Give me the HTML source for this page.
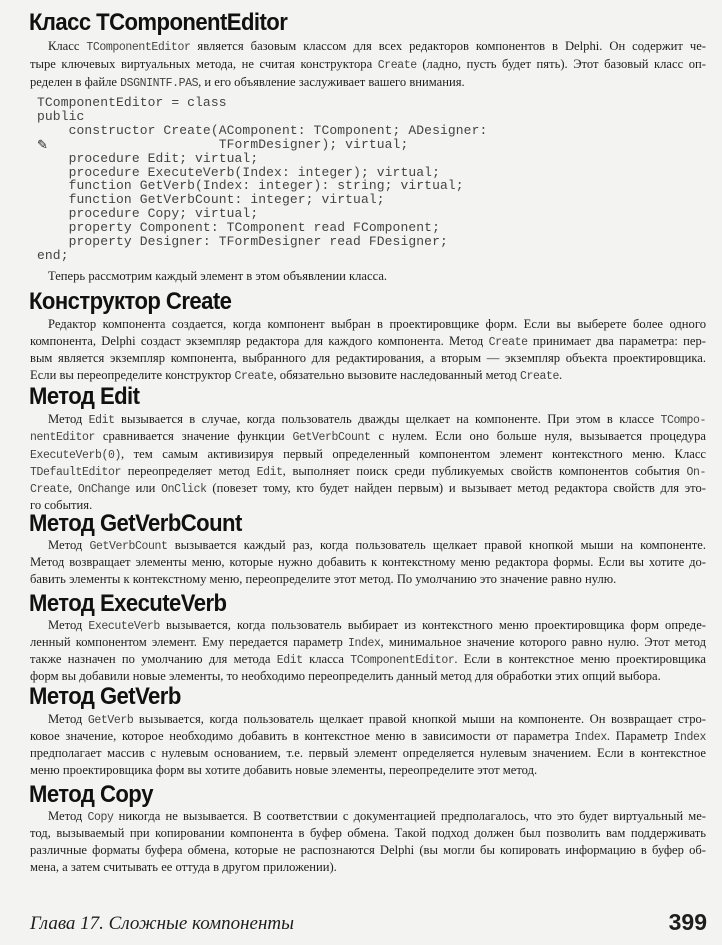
<!DOCTYPE html>
<html><head><meta charset="utf-8"><style>
body{margin:0;background:#f3f3f1;}
#p{position:relative;width:722px;height:945px;overflow:hidden;background:#f3f3f1;color:#1e1e1e;font-family:"Liberation Serif","Noto Serif CJK SC",serif;font-size:12.6px;}
.h{position:absolute;left:29px;font-family:"Liberation Sans Narrow","Liberation Sans",sans-serif;font-weight:bold;font-size:24px;line-height:26px;letter-spacing:-0.6px;color:#111;transform:scaleX(0.92);transform-origin:left;white-space:nowrap;}
.l{position:absolute;left:30px;width:676px;line-height:17px;height:17px;text-align:justify;text-align-last:justify;white-space:nowrap;overflow:visible;}
.l.f{left:48px;width:658px;}
.l.e{text-align-last:left;}
code{font-family:"Liberation Mono",monospace;font-size:11.5px;letter-spacing:-0.4px;color:#444;}
.c{position:absolute;left:37px;font-family:"Liberation Mono",monospace;font-size:13px;letter-spacing:0.1px;line-height:13.9px;white-space:pre;color:#444;}
</style></head><body><div id="p">
<div class="h" style="top:10px;">Класс TComponentEditor</div>
<div class="l f" style="top:38px;">Класс <code>TComponentEditor</code> является базовым классом для всех редакторов компонентов в Delphi. Он содержит че-</div>
<div class="l" style="top:56px;">тыре ключевых виртуальных метода, не считая конструктора <code>Create</code> (ладно, пусть будет пять). Этот базовый класс оп-</div>
<div class="l e" style="top:74px;">ределен в файле <code>DSGNINTF.PAS</code>, и его объявление заслуживает вашего внимания.</div>
<div class="c" style="top:96px;">TComponentEditor = class
public
    constructor Create(AComponent: TComponent; ADesigner:
                       TFormDesigner); virtual;
    procedure Edit; virtual;
    procedure ExecuteVerb(Index: integer); virtual;
    function GetVerb(Index: integer): string; virtual;
    function GetVerbCount: integer; virtual;
    procedure Copy; virtual;
    property Component: TComponent read FComponent;
    property Designer: TFormDesigner read FDesigner;
end;</div>
<div style="position:absolute;left:37px;top:137px;font-size:13px;">&#9998;</div>
<div class="l f" style="top:268px;text-align-last:left;">Теперь рассмотрим каждый элемент в этом объявлении класса.</div>
<div class="h" style="top:289px;">Конструктор Create</div>
<div class="l f" style="top:316px;">Редактор компонента создается, когда компонент выбран в проектировщике форм. Если вы выберете более одного</div>
<div class="l" style="top:333px;">компонента, Delphi создаст экземпляр редактора для каждого компонента. Метод <code>Create</code> принимает два параметра: пер-</div>
<div class="l" style="top:350px;">вым является экземпляр компонента, выбранного для редактирования, а вторым — экземпляр объекта проектировщика.</div>
<div class="l e" style="top:367px;">Если вы переопределите конструктор <code>Create</code>, обязательно вызовите наследованный метод <code>Create</code>.</div>
<div class="h" style="top:384px;">Метод Edit</div>
<div class="l f" style="top:411px;">Метод <code>Edit</code> вызывается в случае, когда пользователь дважды щелкает на компоненте. При этом в классе <code>TCompo-</code></div>
<div class="l" style="top:428px;"><code>nentEditor</code> сравнивается значение функции <code>GetVerbCount</code> с нулем. Если оно больше нуля, вызывается процедура</div>
<div class="l" style="top:446px;"><code>ExecuteVerb(0)</code>, тем самым активизируя первый определенный компонентом элемент контекстного меню. Класс</div>
<div class="l" style="top:463px;"><code>TDefaultEditor</code> переопределяет метод <code>Edit</code>, выполняет поиск среди публикуемых свойств компонентов события <code>On-</code></div>
<div class="l" style="top:480px;"><code>Create</code>, <code>OnChange</code> или <code>OnClick</code> (повезет тому, кто будет найден первым) и вызывает метод редактора свойств для это-</div>
<div class="l e" style="top:497px;">го события.</div>
<div class="h" style="top:511px;">Метод GetVerbCount</div>
<div class="l f" style="top:537px;">Метод <code>GetVerbCount</code> вызывается каждый раз, когда пользователь щелкает правой кнопкой мыши на компоненте.</div>
<div class="l" style="top:554px;">Метод возвращает элементы меню, которые нужно добавить к контекстному меню редактора формы. Если вы хотите до-</div>
<div class="l e" style="top:571px;">бавить элементы к контекстному меню, переопределите этот метод. По умолчанию это значение равно нулю.</div>
<div class="h" style="top:591px;">Метод ExecuteVerb</div>
<div class="l f" style="top:617px;">Метод <code>ExecuteVerb</code> вызывается, когда пользователь выбирает из контекстного меню проектировщика форм опреде-</div>
<div class="l" style="top:634px;">ленный компонентом элемент. Ему передается параметр <code>Index</code>, минимальное значение которого равно нулю. Этот метод</div>
<div class="l" style="top:651px;">также назначен по умолчанию для метода <code>Edit</code> класса <code>TComponentEditor</code>. Если в контекстное меню проектировщика</div>
<div class="l e" style="top:668px;">форм вы добавили новые элементы, то необходимо переопределить данный метод для обработки этих опций выбора.</div>
<div class="h" style="top:684px;">Метод GetVerb</div>
<div class="l f" style="top:711px;">Метод <code>GetVerb</code> вызывается, когда пользователь щелкает правой кнопкой мыши на компоненте. Он возвращает стро-</div>
<div class="l" style="top:728px;">ковое значение, которое необходимо добавить в контекстное меню в зависимости от параметра <code>Index</code>. Параметр <code>Index</code></div>
<div class="l" style="top:745px;">предполагает массив с нулевым основанием, т.е. первый элемент определяется нулевым значением. Если в контекстное</div>
<div class="l e" style="top:762px;">меню проектировщика форм вы хотите добавить новые элементы, переопределите этот метод.</div>
<div class="h" style="top:782px;">Метод Copy</div>
<div class="l f" style="top:808px;">Метод <code>Copy</code> никогда не вызывается. В соответствии с документацией предполагалось, что это будет виртуальный ме-</div>
<div class="l" style="top:825px;">тод, вызываемый при копировании компонента в буфер обмена. Такой подход должен был позволить вам поддерживать</div>
<div class="l" style="top:842px;">различные форматы буфера обмена, которые не распознаются Delphi (вы могли бы копировать информацию в буфер об-</div>
<div class="l e" style="top:859px;">мена, а затем считывать ее оттуда в другом приложении).</div>
<div style="position:absolute;left:30px;top:913px;font-style:italic;font-size:19px;line-height:22px;">Глава 17. Сложные компоненты</div>
<div style="position:absolute;right:15px;top:909px;font-family:'Liberation Sans Narrow','Liberation Sans',sans-serif;font-weight:bold;font-size:23px;line-height:26px;">399</div>
</div></body></html>
